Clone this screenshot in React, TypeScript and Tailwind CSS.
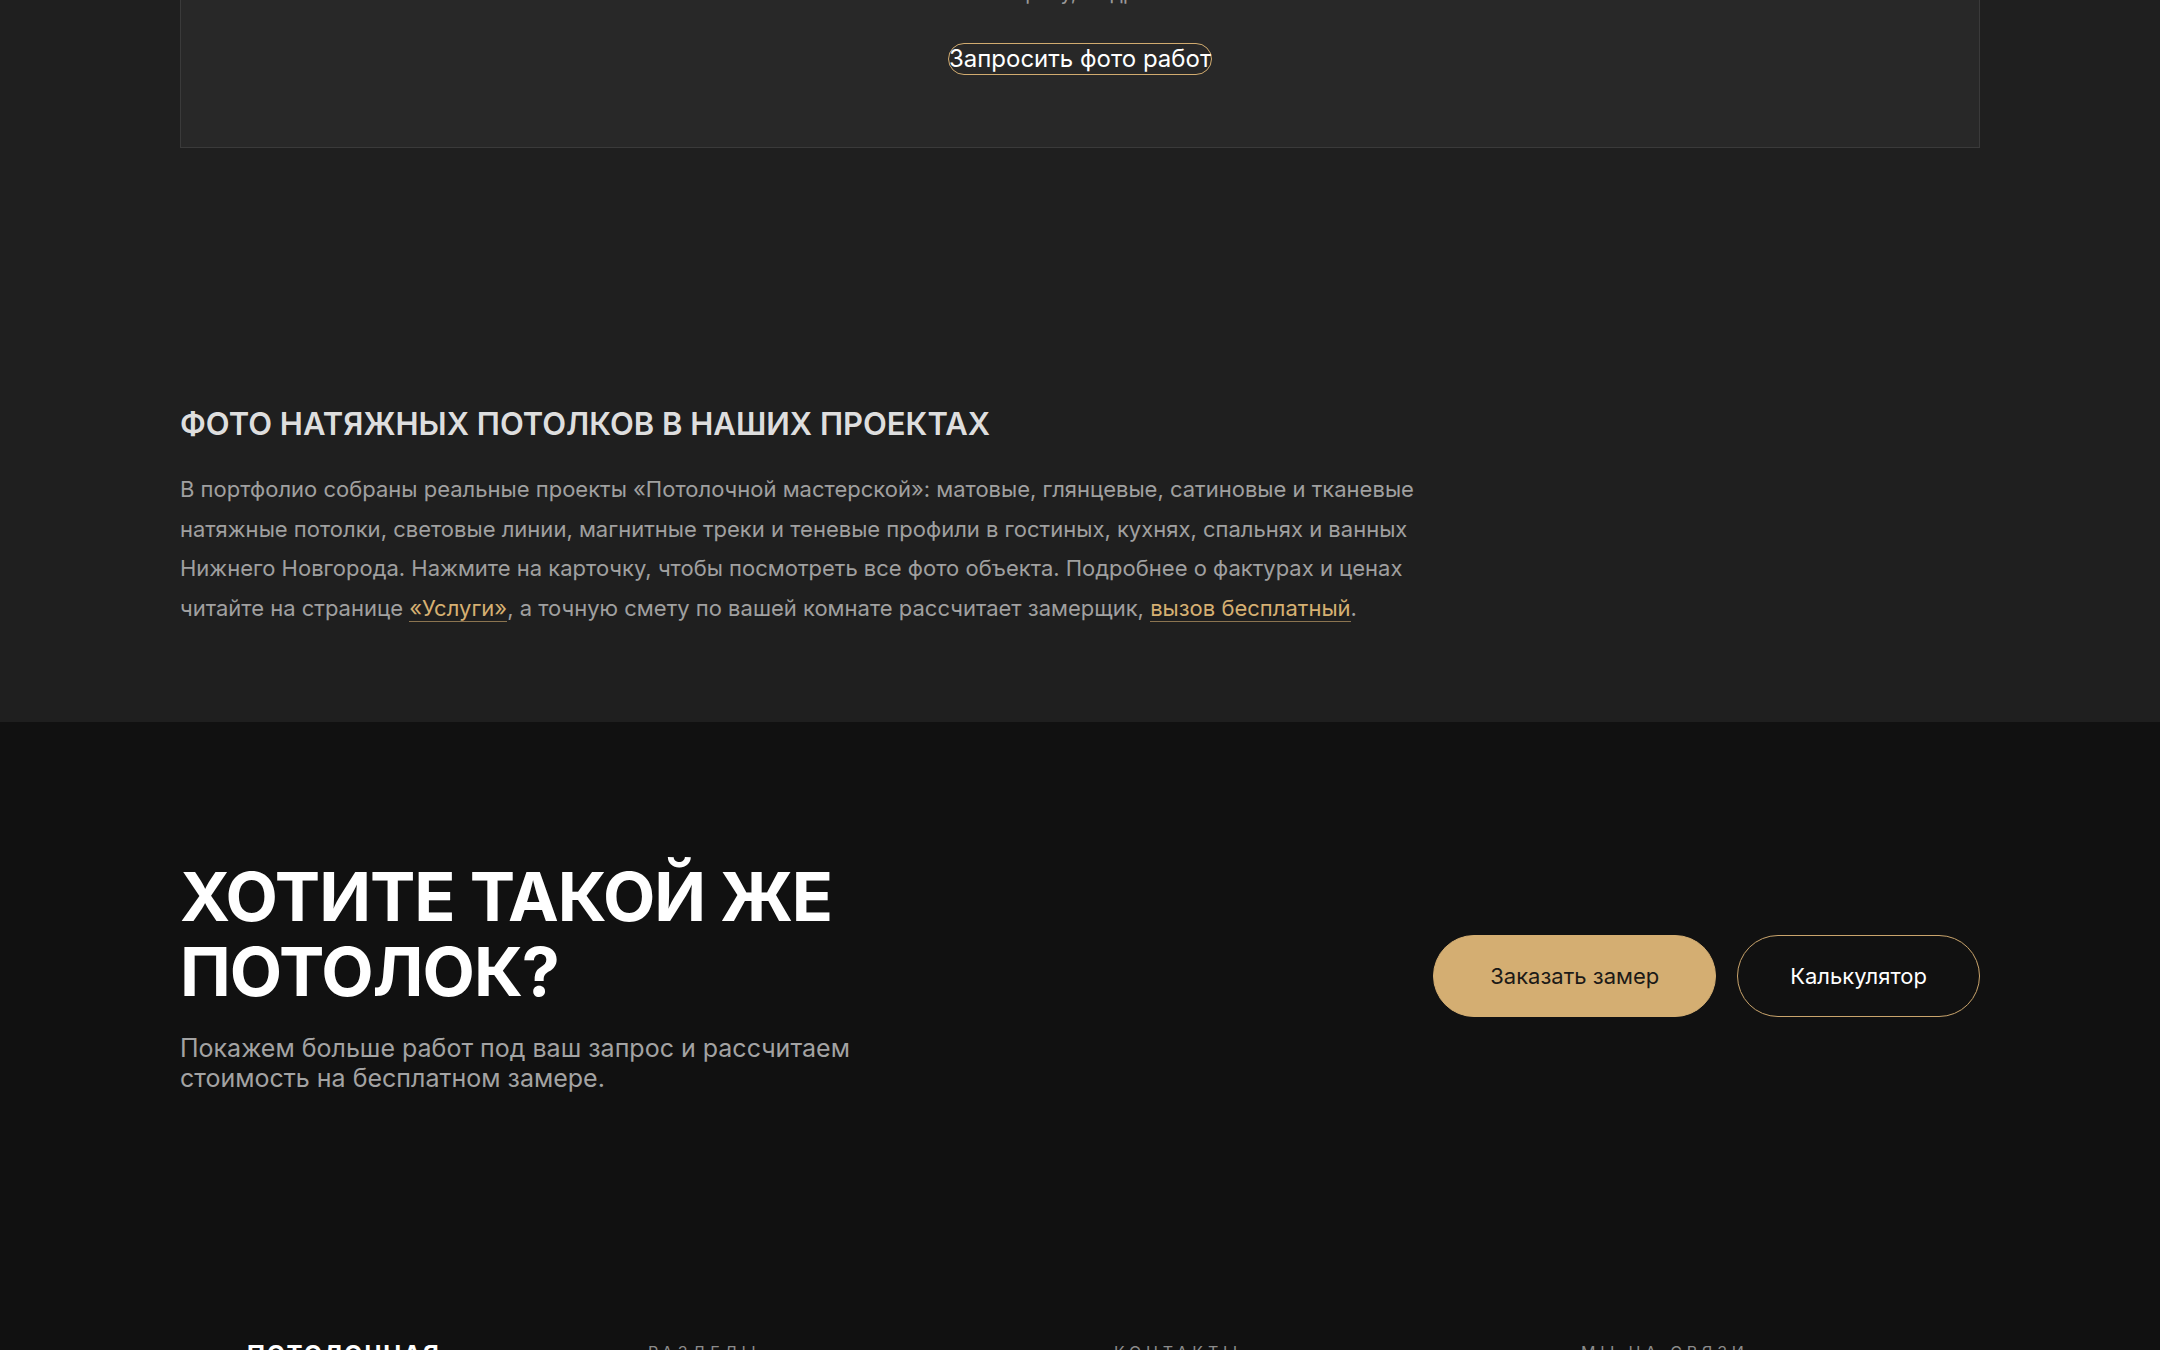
import React from 'react';

const footerCols = [
  { title: 'Разделы', items: ['Услуги', 'Портфолио', 'Калькулятор', 'О нас'] },
  { title: 'Контакты', items: ['+7 (831) 000-00-00', 'Нижний Новгород'] },
  { title: 'Мы на связи', items: ['Telegram', 'WhatsApp', 'ВКонтакте'] },
];

const App: React.FC = () => {
  return (
    <div className="flex min-h-screen flex-col overflow-hidden bg-[#1f1f1f] font-['Inter','Noto_Sans',sans-serif] antialiased">
      {/* request photos box */}
      <section className="flex flex-col bg-[#1f1f1f] pb-40">
        <div className="mx-auto -mt-[96px] flex w-[1800px] flex-col items-center border border-[#3a3a3a] bg-[#282828] px-10 pb-[72px] pt-10">
          <p className="text-center text-[20px] leading-[32px] text-[#9a9a9a]">
            Полная галерея каждого объекта хранится в нашем архиве —
            <br />
            по запросу, с адресами
          </p>
          <button className="mt-[34px] rounded-full border border-[#d1ab6f] text-[24px] leading-[30px] text-white">
            Запросить фото работ
          </button>
        </div>
      </section>

      {/* seo text */}
      <section className="bg-[#1f1f1f] pb-[94px] pt-[98px]">
        <div className="mx-auto w-[1800px]">
          <h2 className="text-[31px] font-semibold uppercase leading-[36px] text-[#dedede]">
            Фото натяжных потолков в наших проектах
          </h2>
          <p className="mt-7 max-w-[1260px] text-[22px] leading-[1.8] text-[#a0a0a0]">
            В портфолио собраны реальные проекты «Потолочной мастерской»: матовые, глянцевые, сатиновые и тканевые
            натяжные потолки, световые линии, магнитные треки и теневые профили в гостиных, кухнях, спальнях и ванных
            Нижнего Новгорода. Нажмите на карточку, чтобы посмотреть все фото объекта. Подробнее о фактурах и ценах
            читайте на странице{' '}
            <a href="#" className="border-b border-[#d4ad72]/60 text-[#d6b072]">
              «Услуги»
            </a>
            , а точную смету по вашей комнате рассчитает замерщик,{' '}
            <a href="#" className="border-b border-[#d4ad72]/60 text-[#d6b072]">
              вызов бесплатный
            </a>
            .
          </p>
        </div>
      </section>

      {/* cta */}
      <section className="bg-[#111111] py-[137px]">
        <div className="mx-auto flex w-[1800px] items-center justify-between">
          <div className="max-w-[720px]">
            <h2 className="text-[68px] font-bold uppercase leading-[1.1] tracking-[-0.015em] text-white">
              Хотите такой же потолок?
            </h2>
            <p className="mt-6 text-[25px] leading-[30px] text-[#a3a3a3]">
              Покажем больше работ под ваш запрос и рассчитаем стоимость на бесплатном замере.
            </p>
          </div>
          <div className="flex items-center gap-[21px]">
            <button className="h-[82px] rounded-full border border-[#d4ae72] bg-[#d4ae72] px-[56px] text-[22px] text-[#1c1a17]">
              Заказать замер
            </button>
            <button className="h-[82px] rounded-full border border-[#c9a46c] px-[52px] text-[22px] text-white">
              Калькулятор
            </button>
          </div>
        </div>
      </section>

      {/* footer */}
      <footer className="bg-[#111111] pb-20 pt-[110px]">
        <div className="mx-auto grid w-[1800px] grid-cols-[401px_466px_467px_1fr] px-[67px]">
          <div>
            <div className="text-[24px] font-bold uppercase leading-[29px] tracking-[0.08em] text-white">Потолочная</div>
            <div className="text-[24px] font-bold uppercase leading-[29px] tracking-[0.08em] text-white">мастерская</div>
          </div>
          {footerCols.map((col) => (
            <div key={col.title}>
              <div className="text-[16px] uppercase leading-6 tracking-[0.3em] text-[#8c8c8c]">{col.title}</div>
              <ul className="mt-5 flex flex-col gap-3">
                {col.items.map((item) => (
                  <li key={item} className="text-[18px] text-[#cfcfcf]">
                    {item}
                  </li>
                ))}
              </ul>
            </div>
          ))}
        </div>
      </footer>
    </div>
  );
};

export default App;
